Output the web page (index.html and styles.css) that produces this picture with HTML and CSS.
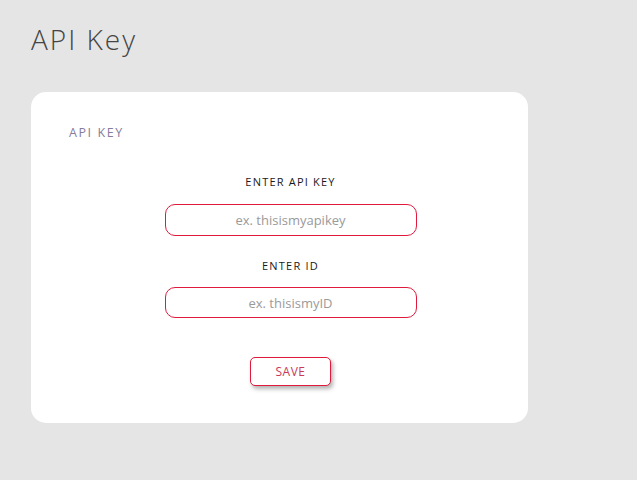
FILE: index.html
```html
<!DOCTYPE html>
<html>
<head>
<meta charset="utf-8">
<link rel="stylesheet" href="styles.css">
</head>
<body>
<div class="page">
  <h1 class="title">API Key</h1>
  <div class="card">
    <div class="card-label">API KEY</div>
    <form class="form">
      <label class="field-label">ENTER API KEY</label>
      <input class="field" type="text" placeholder="ex. thisismyapikey">
      <label class="field-label second">ENTER ID</label>
      <input class="field short" type="text" placeholder="ex. thisismyID">
      <button type="button" class="save">SAVE</button>
    </form>
  </div>
</div>
</body>
</html>
```
FILE: styles.css
```css
html, body {
  margin: 0;
  padding: 0;
  background: #e5e5e5;
  font-family: "Open Sans", "Liberation Sans", sans-serif;
}
.page {
  padding: 22px 0 0 31px;
}
.title {
  margin: 0;
  font-size: 28px;
  font-weight: 300;
  color: #454545;
  line-height: 34px;
  letter-spacing: 2px;
}
.card {
  margin-top: 36px;
  width: 497px;
  height: 331px;
  box-sizing: border-box;
  padding: 33px 16px 0 38px;
  background: #fff;
  border-radius: 15px;
}
.card-label {
  font-size: 12.5px;
  color: #857c9e;
  letter-spacing: 1.6px;
  line-height: 16px;
}
.form {
  display: flex;
  flex-direction: column;
  align-items: center;
  margin-top: 34px;
}
.field-label {
  font-size: 11px;
  font-weight: 500;
  color: #1a1a1a;
  letter-spacing: 1.2px;
  line-height: 14px;
}
.field-label.second {
  margin-top: 23px;
}
.field {
  margin-top: 15px;
  width: 252px;
  height: 32px;
  box-sizing: border-box;
  border: 1px solid #df1a3c;
  border-radius: 10px;
  text-align: center;
  font-family: inherit;
  font-size: 13px;
  color: #333;
  outline: none;
}
.field.short {
  margin-top: 14px;
  height: 31px;
}
.field::placeholder {
  color: #9a9a9a;
}
.save {
  margin-top: 39px;
  width: 81px;
  height: 29px;
  background: #fff;
  border: 1px solid #df1a3c;
  border-radius: 5px;
  box-shadow: 2px 3px 4px rgba(0,0,0,0.3);
  color: #c8395a;
  font-family: inherit;
  font-size: 12px;
  letter-spacing: 0.5px;
  cursor: pointer;
}
```
